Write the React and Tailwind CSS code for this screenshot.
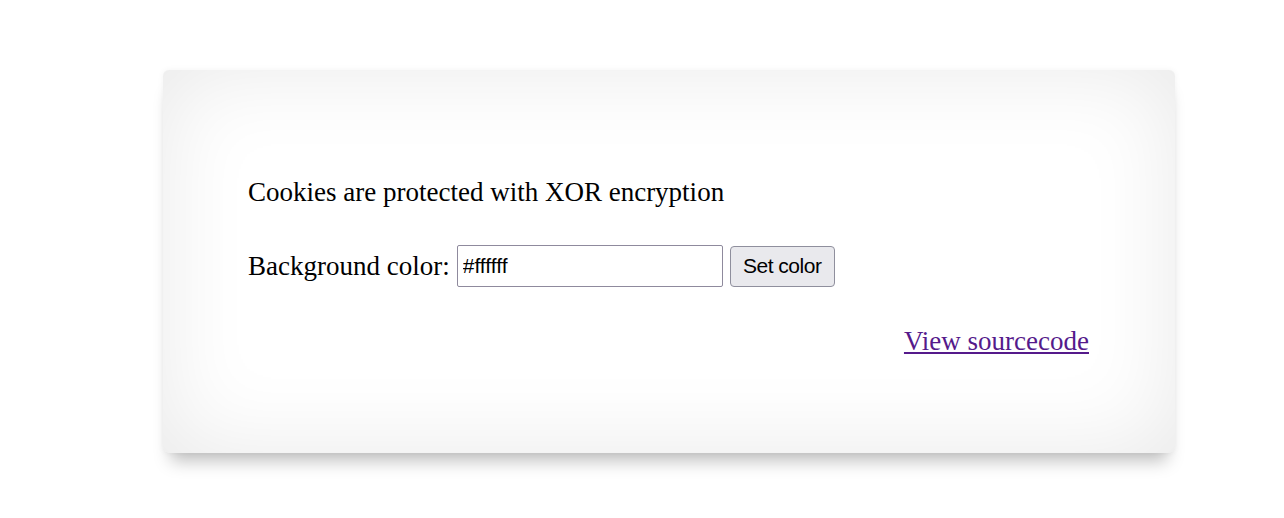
export default function App() {
  return (
    <div className="min-h-[518px] w-full bg-white pt-[70px]" style={{ fontFamily: '"Liberation Serif", "Times New Roman", serif' }}>
      <div className="ml-[163px] w-[1012px] h-[383px] rounded-[6px] bg-white shadow-[inset_0_0_90px_rgba(0,0,0,0.09),0_16px_16px_-8px_rgba(0,0,0,0.25),0_0_6px_rgba(0,0,0,0.05)] pl-[85px] pr-[86px] pt-[107px]">
        <p className="text-[27px] leading-[30px] text-black">Cookies are protected with XOR encryption</p>
        <form className="mt-[37px] flex items-center h-[44px] text-[27px] text-black" onSubmit={e => e.preventDefault()}>
          <span>Background color:</span>
          <input
            defaultValue="#ffffff"
            className="ml-[7px] w-[266px] h-[42px] border border-[#8f8a9d] rounded-[2px] bg-white px-[5px] text-[21px] text-black"
            style={{ fontFamily: '"Liberation Sans", Arial, sans-serif' }}
          />
          <button
            type="submit"
            className="ml-[7px] w-[105px] h-[41px] border border-[#8f8f9d] rounded-[4px] bg-[#e9e9ed] text-[21px] tracking-[-0.5px] text-black"
            style={{ fontFamily: '"Liberation Sans", Arial, sans-serif' }}
          >
            Set color
          </button>
        </form>
        <div className="mt-[38px] flex justify-end">
          <a href="#" className="text-[27px] leading-[30px] text-[#551a8b] underline">View sourcecode</a>
        </div>
      </div>
    </div>
  )
}
